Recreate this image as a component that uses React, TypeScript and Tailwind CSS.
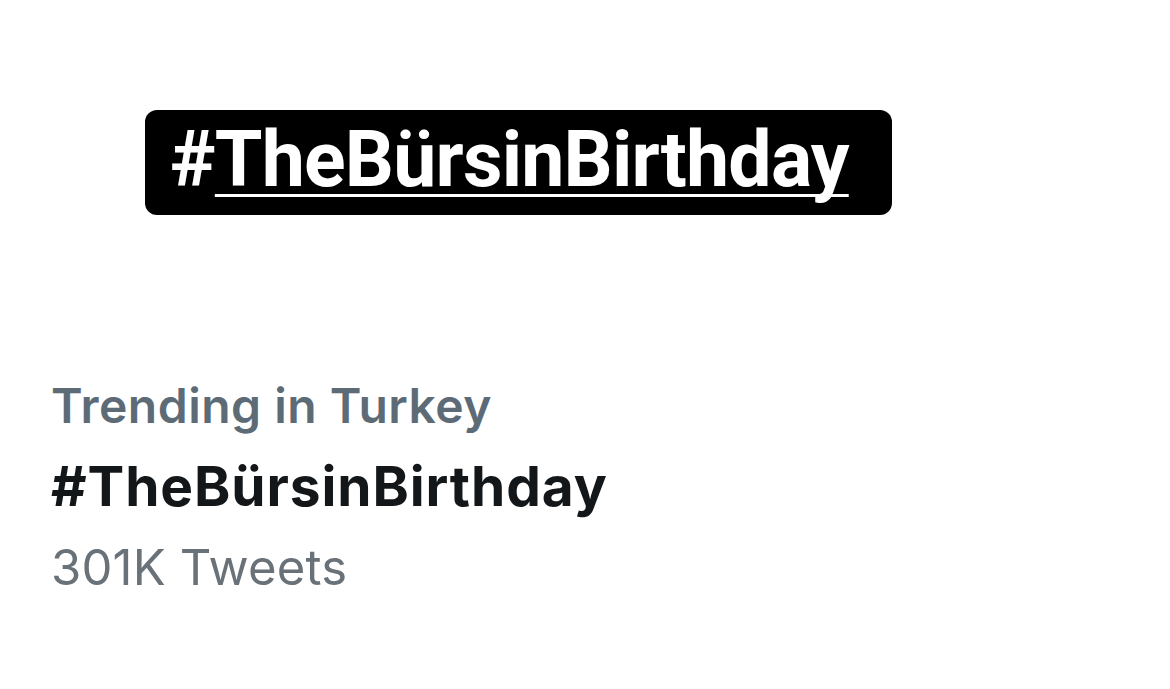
export default function App() {
  return (
    <div className="flex h-[689px] w-[1170px] flex-col bg-white">
      <div className="ml-[145px] mt-[110px] flex h-[105px] w-[747px] items-start rounded-[12px] bg-black pl-[25px] pt-[12px]">
        <div
          className="text-[77px] font-bold leading-none tracking-[-0.8px] text-white"
          style={{ fontFamily: 'Roboto, "Liberation Sans", sans-serif' }}
        >
          #
          <span className="underline decoration-[3px] underline-offset-[8px] [text-decoration-skip-ink:none]">
            TheBürsinBirthday
          </span>
        </div>
      </div>

      <div
        className="ml-[51px] mt-[150px] flex flex-col"
        style={{ fontFamily: 'Inter, "Liberation Sans", sans-serif' }}
      >
        <div className="text-[48px] font-semibold leading-[82px] tracking-[0.5px] text-[#5d6b77]">
          Trending in Turkey
        </div>
        <div className="-mt-[2px] text-[55px] font-bold leading-[82px] tracking-[0.9px] text-[#141719]">
          #TheBürsinBirthday
        </div>
        <div className="text-[49px] leading-[82px] tracking-[0.2px] text-[#6a7279]">301K Tweets</div>
      </div>
    </div>
  );
}
